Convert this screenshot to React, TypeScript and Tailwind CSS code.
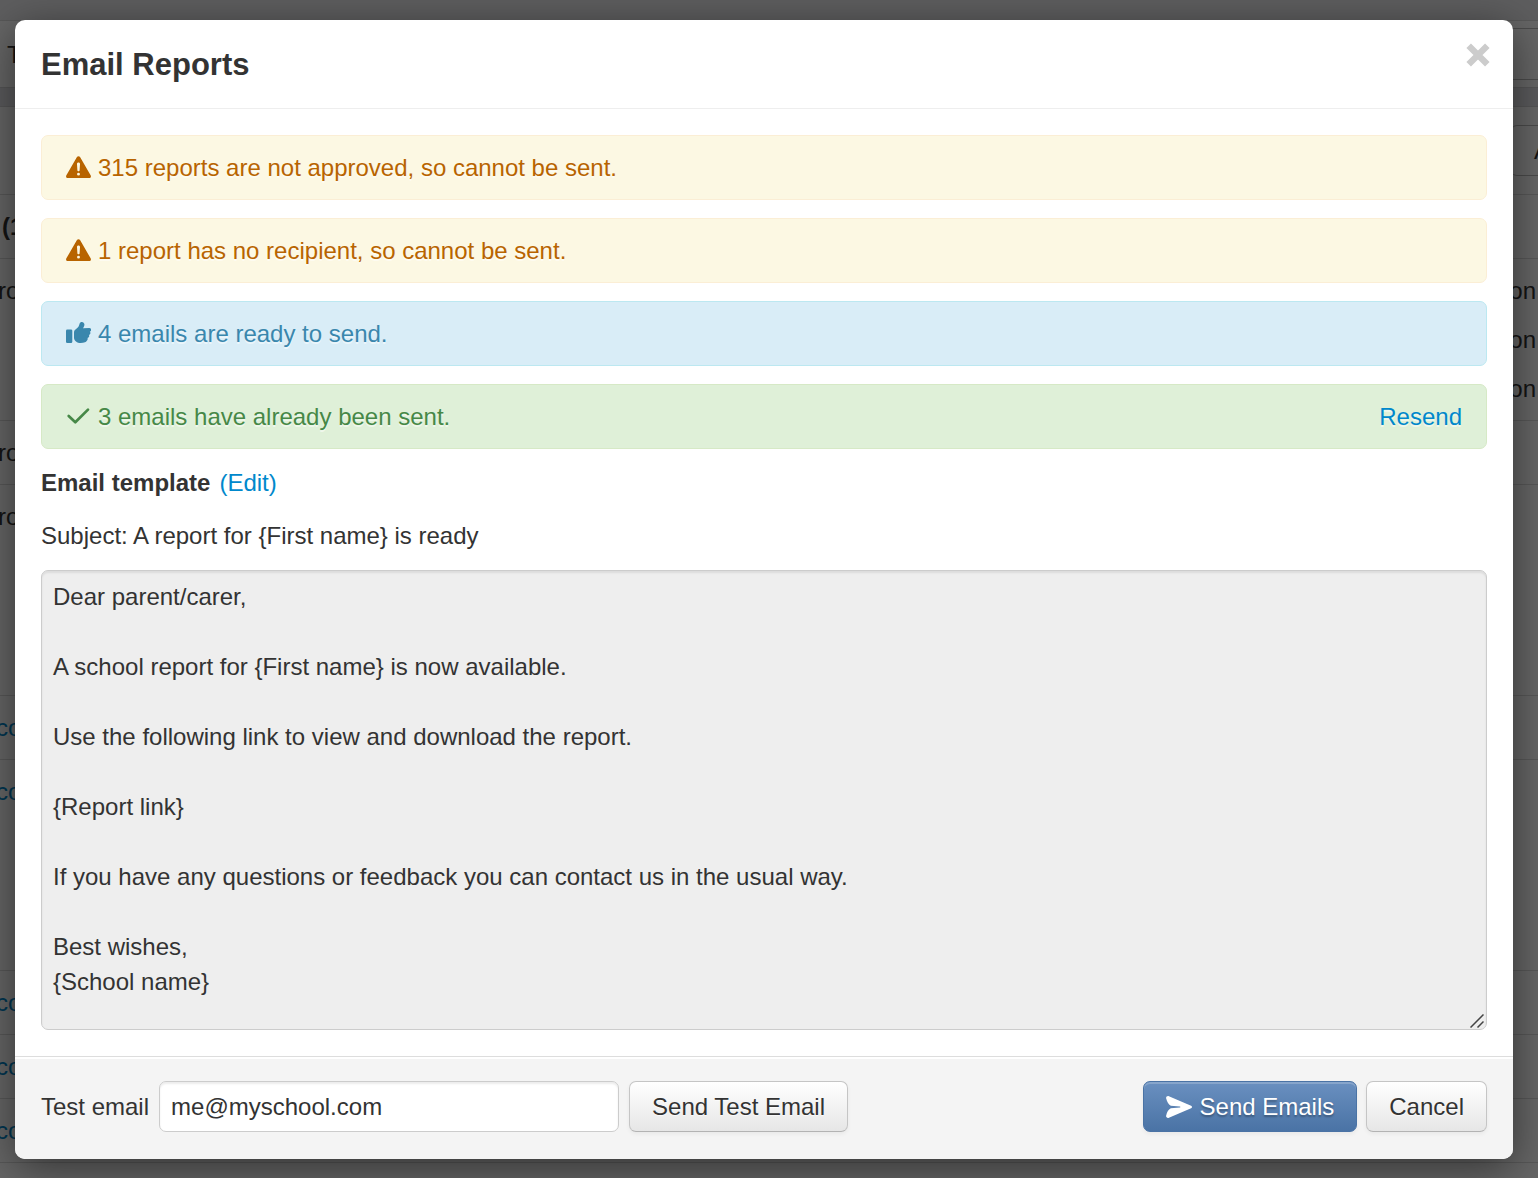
import React, { useState } from 'react';

interface AlertProps {
  className: string;
  icon: React.ReactNode;
  action?: React.ReactNode;
  children: React.ReactNode;
}

interface BackgroundRow {
  left: string;
  leftClass: string;
  right: string[];
  lines: number;
}

const backgroundRows: BackgroundRow[] = [
  { left: '(1', leftClass: 'pl-0.5 font-bold', right: [], lines: 1 },
  { left: 'ro', leftClass: '-ml-0.5', right: ['on', 'on', 'on'], lines: 3 },
  { left: 'ro', leftClass: '-ml-0.5', right: [], lines: 1 },
  { left: 'ro', leftClass: '-ml-0.5', right: [], lines: 4 },
  { left: 'co', leftClass: '-ml-1 text-[#0088cc]', right: [], lines: 1 },
  { left: 'co', leftClass: '-ml-1 text-[#0088cc]', right: [], lines: 4 },
  { left: 'co', leftClass: '-ml-1 text-[#0088cc]', right: [], lines: 1 },
  { left: 'co', leftClass: '-ml-1 text-[#0088cc]', right: [], lines: 1 },
  { left: 'co', leftClass: '-ml-1 text-[#0088cc]', right: [], lines: 1 },
  { left: '', leftClass: '', right: [], lines: 1 },
];

const template = `Dear parent/carer,

A school report for {First name} is now available.

Use the following link to view and download the report.

{Report link}

If you have any questions or feedback you can contact us in the usual way.

Best wishes,
{School name}`;

const buttonClass =
  'h-[51px] rounded-[7px] border border-[#c5c5c5] border-b-[#b3b3b3] bg-linear-to-b from-white to-[#e6e6e6] px-[22px] whitespace-nowrap [text-shadow:0_1px_1px_rgba(255,255,255,0.75)] shadow-[inset_0_2px_0_rgba(255,255,255,0.2),0_2px_4px_rgba(0,0,0,0.05)]';

const WarningIcon = () => (
  <svg viewBox="0 0 25 25" className="size-[25px]" fill="currentColor" aria-hidden="true">
    <path
      fillRule="evenodd"
      d="M12.5 1.2c.7 0 1.300.3 1.700 1L24.600 20.300c.9 1.500-.1 2.700-1.600 2.700H2c-1.500 0-2.500-1.200-1.600-2.700L10.800 2.200c.4-.7 1-1 1.700-1ZM12.500 7.600c-.9 0-1.500.6-1.500 1.400l.4 6.200c0 .7.5 1.100 1.100 1.100s1.100-.4 1.100-1.100L14 9c0-.8-.6-1.400-1.500-1.400ZM12.500 17.700a1.450 1.450 0 1 0 0 2.900 1.450 1.450 0 0 0 0-2.900Z"
    />
  </svg>
);

const ThumbIcon = () => (
  <svg viewBox="0 0 25 25" className="size-[25px]" fill="currentColor" aria-hidden="true">
    <rect x="0" y="8.500" width="6.300" height="13.500" rx="1.300" />
    <path d="M8 11.500c0-1.300.5-2.200 1.500-3l2-1.700c.8-.7 1.200-1.300 1.500-2.300l.5-1.600c.5-1.400 1.800-2.100 3.100-1.700 1.400.4 2.100 1.800 1.700 3.200-.3 1.100-.7 2-1.300 2.900l6.300-.2c1.200 0 2 .9 1.900 1.900-.1.900-.6 1.500-1.400 1.700.5.4.7 1 .6 1.600-.1.900-.7 1.500-1.500 1.600.3.400.4.900.3 1.400-.1.900-.8 1.500-1.700 1.600.2.4.3.8.2 1.200-.2 1.300-1.200 2.600-2.700 3.200-1.200.5-2.800.7-4.400.7-1.800 0-3.300-.5-4.600-1.500-1.300-1-2-2.300-2-3.800Z" />
  </svg>
);

const CheckIcon = () => (
  <svg
    viewBox="0 0 25 25"
    className="size-[25px]"
    fill="none"
    stroke="currentColor"
    strokeWidth="2.700"
    strokeLinecap="round"
    strokeLinejoin="round"
    aria-hidden="true"
  >
    <path d="M2.700 12 9.300 18.300 22 5.600" />
  </svg>
);

const SendIcon = () => (
  <svg viewBox="0 0 26 22" className="h-[22px] w-[26px]" fill="currentColor" aria-hidden="true">
    <path d="M2.900.2 25.100 9.800c1.200.5 1.200 1.900 0 2.400L2.900 21.800C1.200 22.500-.4 21 .2 19.400 1 16.300 2.300 13.500 4.800 12.300L14 11.400c.5-.1.5-.7 0-.8L4.800 9.700C2.300 8.500 1 5.700.2 2.600-.4 1 1.200-.5 2.900.2Z" />
  </svg>
);

const Alert: React.FC<AlertProps> = ({ className, icon, action, children }) => (
  <div
    className={`flex h-[65px] items-center justify-between rounded-[7px] border px-6 [text-shadow:0_2px_0_rgba(255,255,255,0.5)] ${className}`}
  >
    <p className="flex items-center gap-[7px]">
      {icon}
      {children}
    </p>
    {action}
  </div>
);

const BackgroundPage = () => (
  <div className="flex h-screen flex-col overflow-hidden" aria-hidden="true">
    <div className="h-5 shrink-0 bg-[#eaeaed]" />
    <div className="flex h-[67px] shrink-0 items-center justify-between border-t border-[#ddd] pl-[7px]">
      <span>T</span>
      <div className="h-[52px] w-48 border-y border-[#bbb]" />
    </div>
    <div className="h-5 shrink-0 border-y border-[#d4d4d8] bg-[#e4e4e8]" />
    <div className="flex h-[87px] shrink-0 items-center justify-end">
      <div className="flex h-[51px] w-7 items-center justify-end overflow-hidden rounded-l-[7px] border border-r-0 border-[#bbb]">
        <span className="-mr-3">A</span>
      </div>
    </div>
    {backgroundRows.map((row, index) => (
      <div key={index} className="flex shrink-0 justify-between border-t border-[#ddd] py-[14px]">
        <div className={row.leftClass}>{row.left}</div>
        <div className="flex flex-col gap-[14px] pr-0.5">
          {Array.from({ length: row.lines }, (_, line) => (
            <div key={line} className="h-[35px]">
              {row.right[line]}
            </div>
          ))}
        </div>
      </div>
    ))}
  </div>
);

const App: React.FC = () => {
  const [testEmail, setTestEmail] = useState<string>('me@myschool.com');

  return (
    <div className="relative h-screen overflow-hidden bg-white font-['Liberation_Sans',Arial,sans-serif] text-[24px] leading-[35px] text-[#333]">
      <BackgroundPage />

      <div className="absolute inset-0 bg-black/60 px-[15px] pt-5 pr-[25px]">
        <div
          role="dialog"
          aria-labelledby="dialog-title"
          className="overflow-hidden rounded-[10px] bg-white shadow-[0_9px_44px_rgba(0,0,0,0.5)]"
        >
          <header className="flex items-start justify-between border-b border-[#eee] px-[26px] pt-[18px] pb-[17px]">
            <h3 id="dialog-title" className="text-[31px] leading-[53px] font-bold">
              Email Reports
            </h3>
            <button type="button" aria-label="Close" className="-mr-[3px] mt-[5px] text-[#ccc]">
              <svg viewBox="0 0 24 24" className="size-6" stroke="currentColor" strokeWidth="6.400">
                <path d="M2.700 2.700 21.300 21.300M21.300 2.700 2.700 21.300" />
              </svg>
            </button>
          </header>

          <div className="p-[26px]">
            <div className="flex flex-col gap-[18px]">
              <Alert className="border-[#fbeed5] bg-[#fcf8e3] text-[#b86400]" icon={<WarningIcon />}>
                315 reports are not approved, so cannot be sent.
              </Alert>
              <Alert className="border-[#fbeed5] bg-[#fcf8e3] text-[#b86400]" icon={<WarningIcon />}>
                1 report has no recipient, so cannot be sent.
              </Alert>
              <Alert className="border-[#bce8f1] bg-[#d9edf7] text-[#3a87ad]" icon={<ThumbIcon />}>
                4 emails are ready to send.
              </Alert>
              <Alert
                className="border-[#d6e9c6] bg-[#dff0d8] text-[#468847]"
                icon={<CheckIcon />}
                action={
                  <a href="#resend" className="text-[#0088cc]">
                    Resend
                  </a>
                }
              >
                3 emails have already been sent.
              </Alert>
            </div>

            <p className="mt-4 flex gap-[9px]">
              <label htmlFor="template" className="font-bold">
                Email template
              </label>
              <a href="#edit" className="text-[#0088cc]">
                (Edit)
              </a>
            </p>
            <p className="mt-[18px]">Subject: A report for {'{First name}'} is ready</p>

            <div className="relative mt-[17px]">
              <textarea
                id="template"
                readOnly
                value={template}
                className="block h-[460px] w-full resize-none rounded-[7px] border border-[#ccc] bg-[#eee] px-[11px] py-2 shadow-[inset_0_2px_2px_rgba(0,0,0,0.075)] outline-none"
              />
              <svg
                viewBox="0 0 14 14"
                className="absolute right-[3px] bottom-[2px] size-[14px]"
                stroke="#444"
                strokeWidth="1.500"
                aria-hidden="true"
              >
                <path d="M.5 13.500 13.500.5M7.500 13.500 13.500 7.500" />
              </svg>
            </div>
          </div>

          <footer className="flex items-center justify-between border-t border-[#ddd] bg-[#f4f4f4] px-[26px] pt-6 pb-[27px] shadow-[inset_0_2px_0_#fff]">
            <div className="flex items-center gap-[10px]">
              <label htmlFor="test-email">Test email</label>
              <input
                id="test-email"
                type="email"
                value={testEmail}
                onChange={(e) => setTestEmail(e.target.value)}
                className="h-[51px] w-[460px] rounded-[7px] border border-[#ccc] bg-white px-[11px] shadow-[inset_0_2px_2px_rgba(0,0,0,0.075)] outline-none"
              />
              <button type="button" className={buttonClass}>
                Send Test Email
              </button>
            </div>
            <div className="flex items-center gap-[9px]">
              <button
                type="button"
                className="flex h-[51px] items-center gap-[8px] rounded-[7px] border border-[#4a73a5] bg-linear-to-b from-[#6a90c0] to-[#4a73a5] px-[22px] whitespace-nowrap text-white [text-shadow:0_2px_2px_rgba(0,0,0,0.3)] shadow-[inset_0_2px_0_rgba(255,255,255,0.2),0_2px_4px_rgba(0,0,0,0.05)]"
              >
                <SendIcon />
                Send Emails
              </button>
              <button type="button" className={buttonClass}>
                Cancel
              </button>
            </div>
          </footer>
        </div>
      </div>
    </div>
  );
};

export default App;
